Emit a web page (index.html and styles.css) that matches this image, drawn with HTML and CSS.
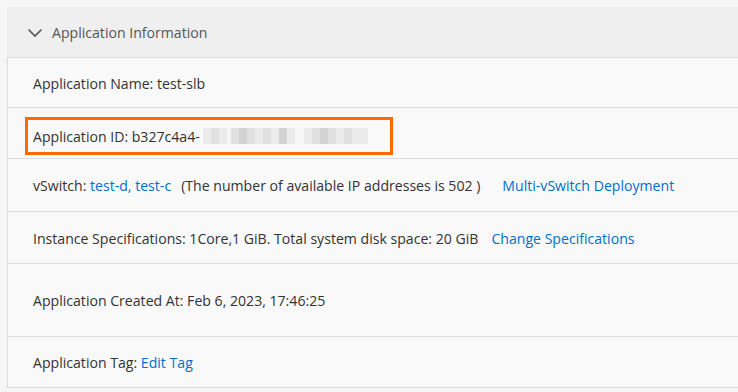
FILE: index.html
```html
<!DOCTYPE html>
<html>
<head>
<meta charset="utf-8">
<link rel="stylesheet" href="styles.css">
</head>
<body>
<div class="panel">
  <div class="panel-header">
    <svg class="chevron" width="16" height="10" viewBox="0 0 16 10"><path d="M1.5 1.5 L8 8 L14.5 1.5" fill="none" stroke="#555" stroke-width="1.6"/></svg>
    <span class="title">Application Information</span>
  </div>
  <div class="panel-body">
    <div class="row h49"><span>Application Name: test-slb</span></div>
    <div class="row h50 row-hl">
      <div class="highlight">
        <span>Application ID: b327c4a4-</span>
        <span class="mosaic">
          <i class="m1"></i><i class="m2"></i><i class="m1"></i><i class="m0 w4"></i><i class="m2"></i><i class="m3"></i><i class="m2"></i><i class="m1"></i><i class="m2"></i><i class="m1"></i><i class="m3"></i><i class="m1"></i><i class="m0 w6"></i><i class="m1"></i><i class="m2"></i><i class="m3"></i><i class="m2"></i><i class="m1"></i><i class="m2"></i><i class="m1"></i><i class="m1"></i>
        </span>
      </div>
    </div>
    <div class="row h52"><span>vSwitch: <a class="link">test-d, test-c</a></span><span class="note">(The number of available IP addresses is 502 )</span><a class="link action-wide">Multi-vSwitch Deployment</a></div>
    <div class="row h51"><span>Instance Specifications: 1Core,1 GiB. Total system disk space: 20 GiB</span><a class="link action">Change Specifications</a></div>
    <div class="row h72"><span>Application Created At: Feb 6, 2023, 17:46:25</span></div>
    <div class="row h50"><span>Application Tag: <a class="link">Edit Tag</a></span></div>
  </div>
</div>
</body>
</html>
```

FILE: styles.css
```css
html, body {
  margin: 0;
  padding: 0;
  background: #f6f6f6;
  overflow: hidden;
}
body {
  padding: 7px 0 0 7px;
  font-family: "Open Sans", "Noto Sans", sans-serif;
  font-size: 14.1px;
  color: #333;
}
.panel {
  width: 760px;
}
.panel-header {
  height: 51px;
  background: #efefef;
  border-bottom: 1px solid #dcdcdc;
  display: flex;
  align-items: center;
  padding-left: 20px;
  padding-top: 1px;
  box-sizing: border-box;
}
.chevron {
  display: block;
  margin-right: 9px;
  margin-top: 1px;
}
.title {
  color: #555;
}
.panel-body {
  background: #f9f9f9;
  border-left: 1px solid #dcdcdc;
}
.row {
  display: flex;
  align-items: center;
  padding-left: 25px;
  padding-top: 1px;
  box-sizing: border-box;
  border-bottom: 1px solid #dcdcdc;
  white-space: nowrap;
}
.h49 { height: 50px; }
.h50 { height: 51px; }
.h51 { height: 52px; }
.h52 { height: 53px; }
.h72 { height: 73px; }
.row-hl {
  padding-left: 17px;
  padding-top: 0;
  align-items: flex-start;
}
.highlight {
  margin-top: 9px;
  width: 368px;
  height: 38px;
  box-sizing: border-box;
  border: 3px solid #ff6a00;
  padding-left: 5px;
  display: flex;
  align-items: center;
}
.mosaic {
  display: flex;
  height: 16px;
  margin-left: 3px;
}
.mosaic i {
  display: block;
  width: 8px;
  height: 16px;
}
.mosaic .w4 { width: 4px; }
.mosaic .w6 { width: 9px; }
.m0 { background: #f6f6f6; }
.m1 { background: #ebebeb; }
.m2 { background: #e0e0e0; }
.m3 { background: #d2d2d2; }
.link {
  color: #0070cc;
  cursor: pointer;
}
.note {
  margin-left: 10px;
}
.action {
  margin-left: 13px;
}
.action-wide {
  margin-left: 22px;
}
```
